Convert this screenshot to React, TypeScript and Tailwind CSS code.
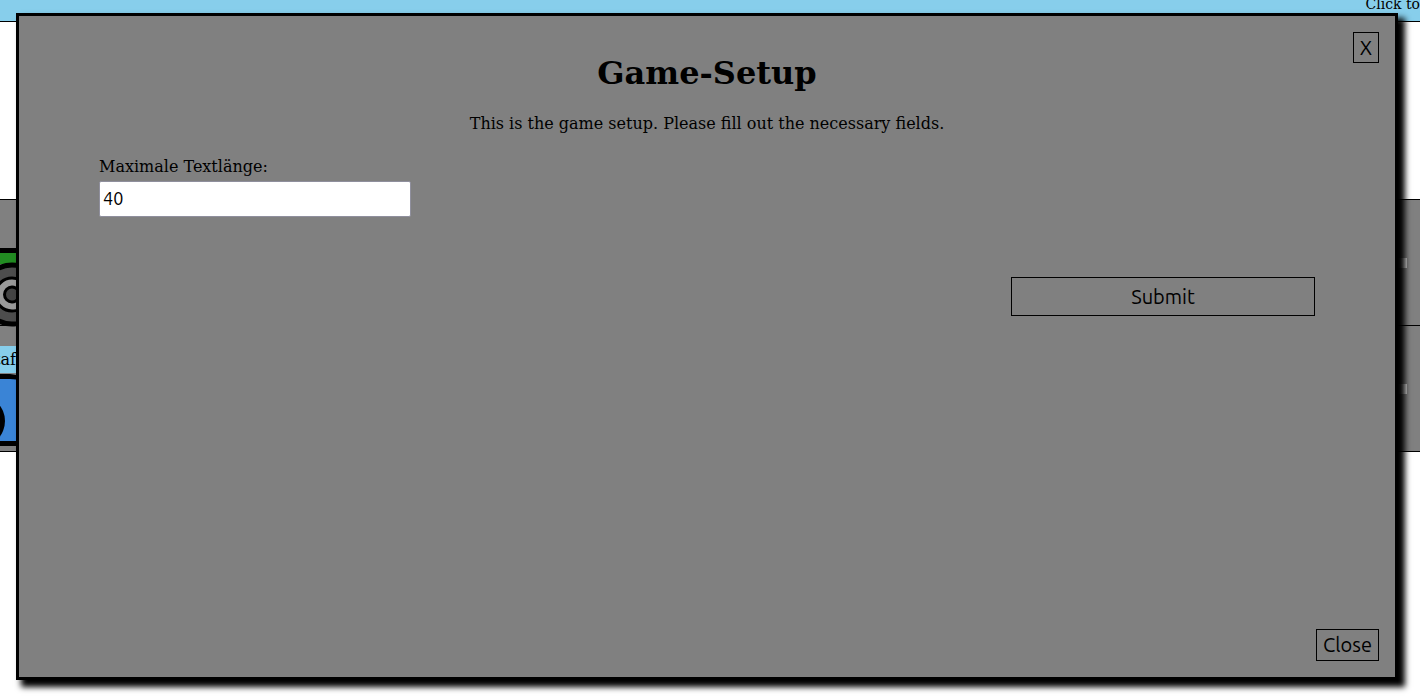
function TrackCard() {
  return (
    <svg className="block h-[82px] w-full" viewBox="0 0 16 82" preserveAspectRatio="xMinYMin slice" aria-hidden="true">
      <rect x="-10" y="2" width="60" height="14" fill="#228b22" />
      <rect x="-10" y="0" width="60" height="5" fill="#000" />
      <circle cx="12" cy="46.5" r="29.5" fill="#4d4d4d" stroke="#000" strokeWidth="5" />
      <circle cx="12" cy="46.5" r="16.5" fill="#999" stroke="#000" strokeWidth="3" />
      <circle cx="12" cy="46.5" r="7.5" fill="#444" stroke="#000" strokeWidth="3" />
    </svg>
  );
}

function StaffCard() {
  return (
    <svg className="block h-[72px] w-full" viewBox="0 0 16 72" preserveAspectRatio="xMinYMin slice" aria-hidden="true">
      <rect x="-10" y="2" width="60" height="68" fill="#3a84d6" />
      <path d="M0 0 H10 L16 1 V5.5 L10 5 H0 Z" />
      <rect x="0" y="67" width="16" height="5" />
      <circle cx="-21" cy="47" r="26" />
    </svg>
  );
}

export default function App() {
  return (
    <div className="relative h-screen overflow-hidden bg-white font-['DejaVu_Serif',serif] text-base text-black">
      <header className="flex h-[22px] justify-end border-b border-black bg-[#87ceeb]">
        <p className="text-sm leading-2 whitespace-nowrap">Click to</p>
      </header>
      <div className="mt-[177px] border-b border-black bg-[#808080]">
        <section className="flex h-[126px] justify-between border-t border-black pt-12">
          <div className="w-4">
            <TrackCard />
          </div>
          <div className="mt-[10px] mr-[13px] h-[10px] w-4 bg-[#d3d3d3]" />
        </section>
        <section className="flex h-[126px] justify-between border-t border-black">
          <div className="w-4 pt-5">
            <div className="flex h-[27px] justify-end bg-[#87ceeb] leading-[27px]">taf</div>
            <div className="mt-px">
              <StaffCard />
            </div>
          </div>
          <div className="mt-[58px] mr-[13px] h-[10px] w-4 bg-[#d3d3d3]" />
        </section>
      </div>

      <div
        role="dialog"
        aria-labelledby="setup-title"
        className="absolute top-[13px] right-[22px] bottom-[18px] left-4 flex flex-col border-3 border-black bg-[#808080] p-4 shadow-[6px_6px_6px_1px_#000]"
      >
        <button className="h-[31px] w-[26px] self-end border border-black font-['Ubuntu','Noto_Sans',sans-serif] text-xl leading-7">
          X
        </button>
        <form className="mx-16 flex flex-1 flex-col" onSubmit={(e) => e.preventDefault()}>
          <h1 id="setup-title" className="-mt-2 text-center text-[32px] leading-9 font-bold">
            Game-Setup
          </h1>
          <p className="mt-[23px] text-center leading-5">This is the game setup. Please fill out the necessary fields.</p>
          <label htmlFor="max-length" className="mt-[23px] self-start leading-5">
            Maximale Textlänge:
          </label>
          <input
            id="max-length"
            type="text"
            defaultValue="40"
            className="mt-1 h-9 w-[312px] rounded-xs border border-[#8f8f9d] bg-white px-[3px] pb-0.5 font-['Ubuntu','Noto_Sans',sans-serif] text-lg"
          />
          <button
            type="submit"
            className="mt-15 h-[39px] w-[304px] self-end border border-black font-['Ubuntu','Noto_Sans',sans-serif] text-xl"
          >
            Submit
          </button>
        </form>
        <button className="h-8 w-[63px] self-end border border-black font-['Ubuntu','Noto_Sans',sans-serif] text-xl leading-7">
          Close
        </button>
      </div>
    </div>
  );
}
